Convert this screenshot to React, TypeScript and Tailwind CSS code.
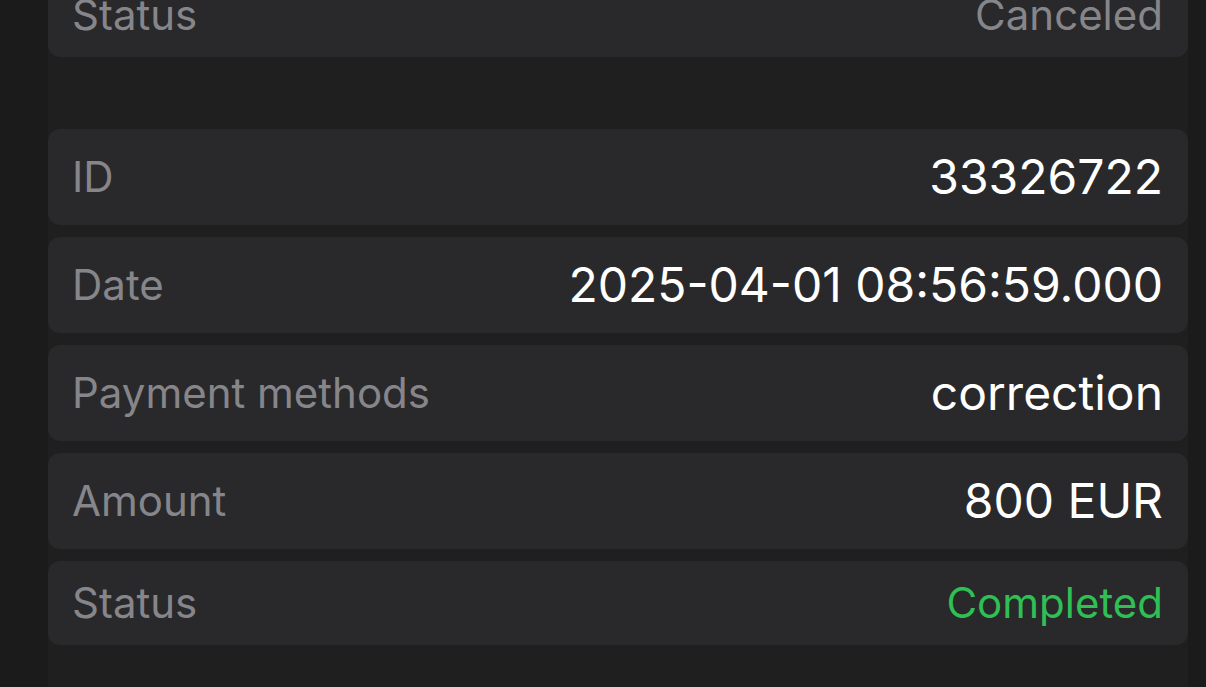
import React from "react";

type Row = { label: string; value: string; tone: "white" | "gray" | "green"; tall: boolean };

const group2: Row[] = [
  { label: "ID", value: "33326722", tone: "white", tall: true },
  { label: "Date", value: "2025-04-01 08:56:59.000", tone: "white", tall: true },
  { label: "Payment methods", value: "correction", tone: "white", tall: true },
  { label: "Amount", value: "800 EUR", tone: "white", tall: true },
  { label: "Status", value: "Completed", tone: "green", tall: false },
];

function InfoRow({ row }: { row: Row }) {
  const valueClass =
    row.tone === "white"
      ? "text-white text-[48px]"
      : row.tone === "green"
      ? "text-[#2fbf55] text-[42px]"
      : "text-[#86868a] text-[42px]";
  return (
    <div
      className={`flex items-center justify-between rounded-[12px] bg-[#29292b] pl-[24px] pr-[25px] ${
        row.tall ? "h-[96px]" : "h-[84px]"
      }`}
    >
      <span className="text-[42px] leading-none text-[#86868a]">{row.label}</span>
      <span className={`${valueClass} leading-none`}>{row.value}</span>
    </div>
  );
}

export default function App() {
  return (
    <div
      className="h-[687px] w-[1206px] overflow-hidden bg-[#1b1b1b] pl-[48px] pr-[18px]"
      style={{ fontFamily: "Inter, 'Noto Sans', sans-serif" }}
    >
      <div className="flex h-full flex-col bg-[#1f1f1f]">
        <div className="-mt-[27px] flex flex-col gap-[12px]">
          <InfoRow row={{ label: "Status", value: "Canceled", tone: "gray", tall: false }} />
        </div>
        <div className="mt-[72px] flex flex-col gap-[12px]">
          {group2.map((r) => (
            <InfoRow key={r.label} row={r} />
          ))}
        </div>
      </div>
    </div>
  );
}
